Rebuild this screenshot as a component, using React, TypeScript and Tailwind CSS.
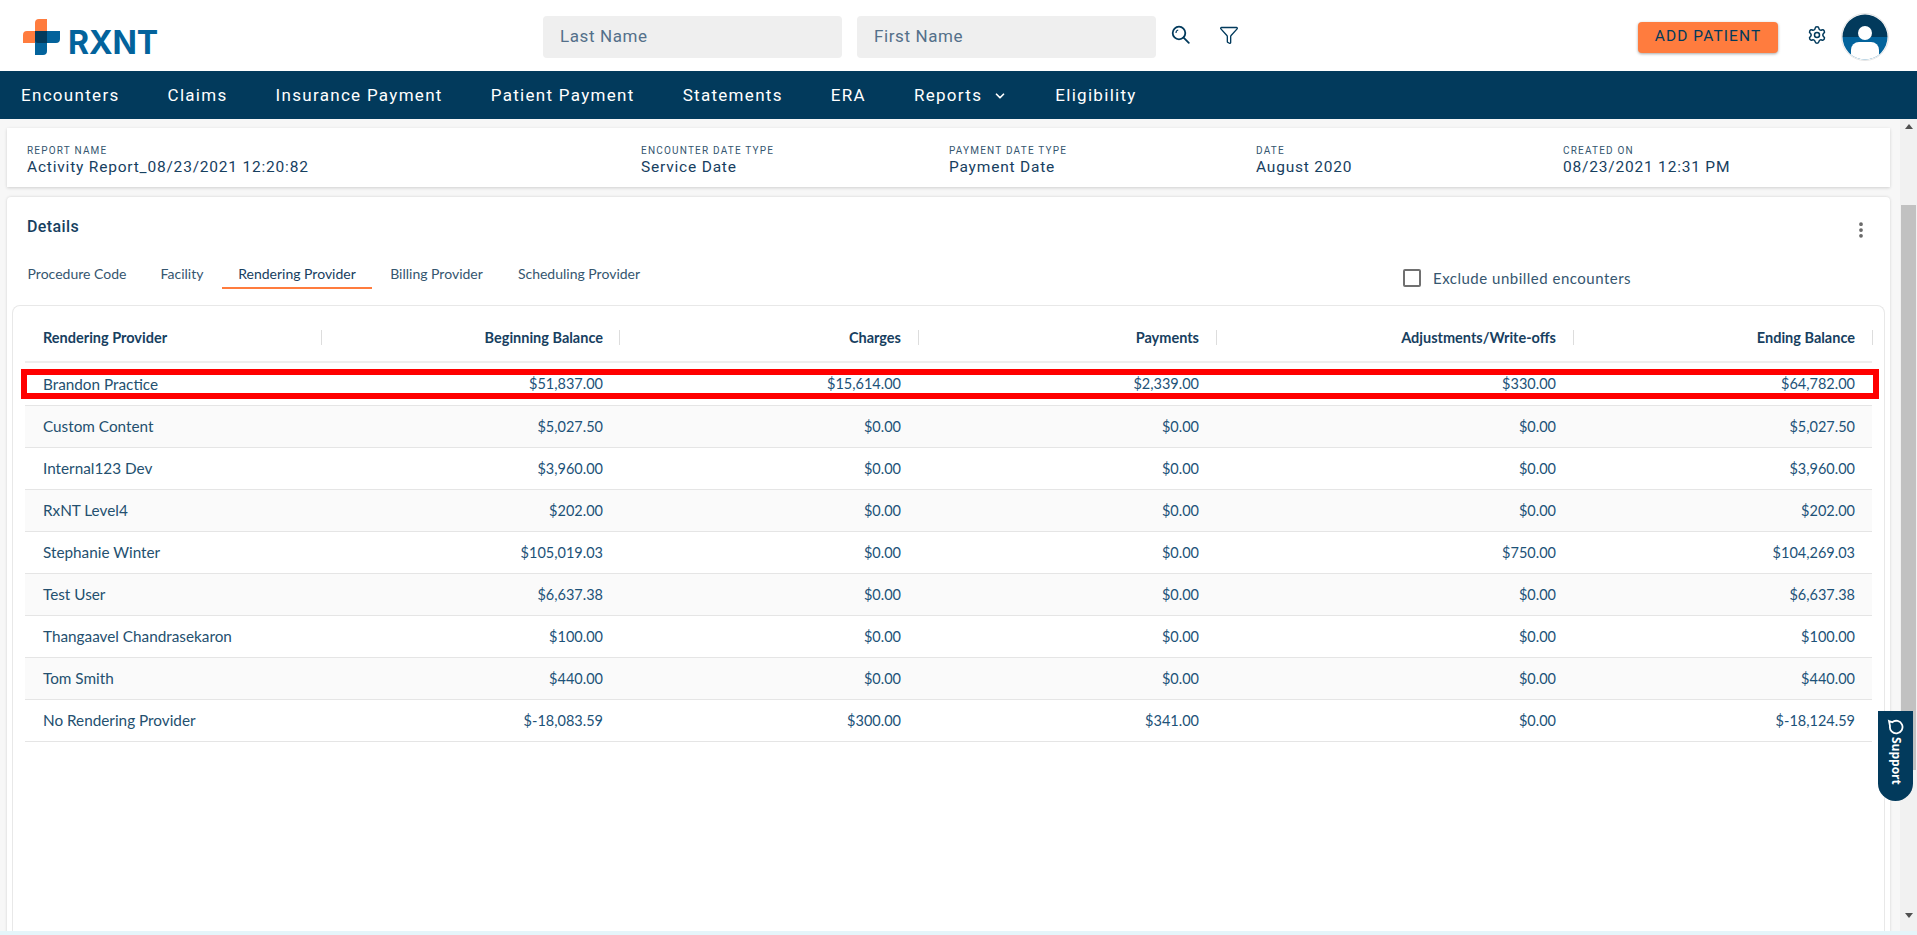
import { ChevronDown, EllipsisVertical, Filter, Settings } from "lucide-react";

const navItems = ["Encounters", "Claims", "Insurance Payment", "Patient Payment", "Statements", "ERA", "Reports", "Eligibility"];

const summary = [
  { label: "REPORT NAME", value: "Activity Report_08/23/2021 12:20:82", width: "w-[614px]" },
  { label: "ENCOUNTER DATE TYPE", value: "Service Date", width: "w-[308px]" },
  { label: "PAYMENT DATE TYPE", value: "Payment Date", width: "w-[307px]" },
  { label: "DATE", value: "August 2020", width: "w-[307px]" },
  { label: "CREATED ON", value: "08/23/2021 12:31 PM", width: "w-[300px]" },
];

const tabs = [
  { name: "Procedure Code", active: false, width: "w-[116px]" },
  { name: "Facility", active: false, width: "ml-[7px] w-[80px]" },
  { name: "Rendering Provider", active: true, width: "w-[150px]" },
  { name: "Billing Provider", active: false, width: "w-[129px]" },
  { name: "Scheduling Provider", active: false, width: "w-[156px]" },
];

const rows = [
  ["Brandon Practice", "$51,837.00", "$15,614.00", "$2,339.00", "$330.00", "$64,782.00"],
  ["Custom Content", "$5,027.50", "$0.00", "$0.00", "$0.00", "$5,027.50"],
  ["Internal123 Dev", "$3,960.00", "$0.00", "$0.00", "$0.00", "$3,960.00"],
  ["RxNT Level4", "$202.00", "$0.00", "$0.00", "$0.00", "$202.00"],
  ["Stephanie Winter", "$105,019.03", "$0.00", "$0.00", "$750.00", "$104,269.03"],
  ["Test User", "$6,637.38", "$0.00", "$0.00", "$0.00", "$6,637.38"],
  ["Thangaavel Chandrasekaron", "$100.00", "$0.00", "$0.00", "$0.00", "$100.00"],
  ["Tom Smith", "$440.00", "$0.00", "$0.00", "$0.00", "$440.00"],
  ["No Rendering Provider", "$-18,083.59", "$300.00", "$341.00", "$0.00", "$-18,124.59"],
];

const headers = ["Rendering Provider", "Beginning Balance", "Charges", "Payments", "Adjustments/Write-offs", "Ending Balance"];
const gridCols = "grid grid-cols-[297px_298px_299px_298px_357px_299px]";

function Logo() {
  return (
    <div className="flex items-end gap-[8px]">
      <svg width="37" height="36" viewBox="0 0 37 36">
        <path d="M12 4a4 4 0 0 1 4-4h8v24H0V16a4 4 0 0 1 4-4h8z" fill="#ff7c3e" />
        <path d="M12 12h25v8a4 4 0 0 1-4 4h-9v8a4 4 0 0 1-4 4h-8z" fill="#03639c" />
        <path d="M12 12h12v12H15a3 3 0 0 1-3-3z" fill="#023a5c" />
      </svg>
      <span className="font-['Inter',sans-serif] text-[32px] leading-[24px] font-bold tracking-[-0.1px] text-[#03639c]">RXNT</span>
    </div>
  );
}

function Avatar() {
  return (
    <svg width="48" height="48" viewBox="0 0 48 48">
      <defs>
        <clipPath id="avatar-clip">
          <circle cx="24" cy="24" r="22.5" />
        </clipPath>
      </defs>
      <circle cx="24" cy="24" r="23.5" fill="#fff" stroke="#e6e6e6" />
      <g clipPath="url(#avatar-clip)">
        <rect width="48" height="24" fill="#023a5c" />
        <rect y="24" width="48" height="24" fill="#03639c" />
        <circle cx="24" cy="20" r="7" fill="#fff" />
        <path d="M10 48V37a8 8 0 0 1 8-8h12a8 8 0 0 1 8 8v11z" fill="#fff" />
      </g>
    </svg>
  );
}

function Header() {
  return (
    <header className="flex h-[71px] shrink-0 items-center bg-white pt-[3px]">
      <div className="ml-[23px] w-[520px]">
        <Logo />
      </div>
      <div className="flex gap-[15px]">
        <div className="flex h-[42px] w-[299px] items-center rounded bg-[#efefef] px-[17px] text-[17px] tracking-[0.6px] text-[#54708a]">Last Name</div>
        <div className="flex h-[42px] w-[299px] items-center rounded bg-[#efefef] px-[17px] text-[17px] tracking-[0.6px] text-[#54708a]">First Name</div>
      </div>
      <svg className="mb-[5px] ml-[15px] text-[#023a5c]" width="19" height="19" viewBox="0 0 19 19" fill="none" stroke="currentColor" strokeWidth="1.8">
        <circle cx="8" cy="8" r="6.3" />
        <path d="M12.6 12.6l5.2 5.2" strokeLinecap="round" />
        <path d="M5 8a3 3 0 0 1 2.2-3" strokeWidth="1.1" />
      </svg>
      <Filter className="mb-[4px] ml-[29px] h-[20px] w-[20px] text-[#023a5c]" strokeWidth={1.6} />
      <button className="ml-[399px] h-[31px] w-[140px] rounded bg-[#ff7c3e] text-[15.5px] tracking-[1.1px] text-[#023a5c] shadow-[0_1px_3px_rgba(0,0,0,0.35)]">ADD PATIENT</button>
      <Settings className="mb-[4px] ml-[29px] h-[20px] w-[20px] text-[#023a5c]" strokeWidth={1.8} />
      <div className="mb-[1px] ml-[14px]">
        <Avatar />
      </div>
    </header>
  );
}

function Nav() {
  return (
    <nav className="flex h-[48px] shrink-0 items-center gap-[48px] bg-[#023a5c] pt-[1px] pl-[21px] text-[17px] tracking-[1.3px] text-white">
      {navItems.map((item) => (
        <span key={item} className="flex items-center">
          {item}
          {item === "Reports" && <ChevronDown className="ml-[11px] h-[14px] w-[14px]" strokeWidth={3} />}
        </span>
      ))}
    </nav>
  );
}

function Summary() {
  return (
    <section className="flex h-[59px] shrink-0 items-center bg-white pt-[6px] pl-[20px] shadow-[0_1px_3px_rgba(0,0,0,0.16)]">
      {summary.map((s) => (
        <div key={s.label} className={s.width}>
          <div className="text-[10px] leading-[13px] tracking-[1.2px] text-[#35566f]">{s.label}</div>
          <div className="mt-[1px] text-[15.5px] leading-[19px] tracking-[0.8px] text-[#17405f]">{s.value}</div>
        </div>
      ))}
    </section>
  );
}

function ReportTable() {
  return (
    <div className="mx-[5px] h-[640px] rounded-t-lg border border-b-0 border-[#e8e8e8] px-[12px] font-['Lato',sans-serif]">
      <div className={`${gridCols} h-[57px] items-center border-b-2 border-[#eeeeee] pt-[7px] text-[14.5px] font-bold text-[#17405f]`}>
        {headers.map((h, i) => (
          <div key={h} className={`h-[15px] border-r border-[#dddddd] leading-[15px] ${i < 2 ? "pr-[16px]" : "pr-[17px]"} ${i === 0 ? "pl-[18px]" : "text-right"}`}>{h}</div>
        ))}
      </div>
      {rows.map((row, r) => (
        <div key={row[0]} className={`${gridCols} relative items-center border-b border-[#e5e5e5] text-[14.5px] text-[#1d5278] ${r === 0 ? "h-[43px]" : "h-[42px]"} ${r % 2 === 1 ? "bg-[#fafafa]" : "bg-white"}`}>
          {row.map((cell, i) => (
            <div key={i} className={`${i < 2 ? "pr-[17px]" : "pr-[18px]"} ${i === 0 ? "pl-[18px] text-[15.3px] text-[#24506f]" : "text-right"}`}>{cell}</div>
          ))}
          {r === 0 && <div className="absolute top-[6px] -right-[7px] -left-[4px] h-[30px] border-[6px] border-[#ff0000]" />}
        </div>
      ))}
    </div>
  );
}

function Details() {
  return (
    <section className="mt-[10px] flex-1 rounded-t bg-white shadow-[0_0_3px_rgba(0,0,0,0.16)]">
      <div className="flex h-[64px] items-start justify-between pt-[20px] pr-[19px] pl-[20px]">
        <span className="text-[16px] leading-[20px] font-medium tracking-[0.4px] text-[#17405f]">Details</span>
        <EllipsisVertical className="mt-[3px] h-[20px] w-[20px] text-[#666666]" strokeWidth={2.5} />
      </div>
      <div className="flex h-[44px] items-start pl-[12px] font-['Lato',sans-serif] text-[14px]">
        {tabs.map((t) => (
          <div key={t.name} className={`${t.width} h-[28px] shrink-0 text-center leading-[25px] ${t.active ? "border-b-2 border-[#ff7c3e] text-[#17405f]" : "text-[#35566f]"}`}>{t.name}</div>
        ))}
        <div className="ml-[746px] flex items-center pt-[6px]">
          <span className="h-[18px] w-[18px] rounded-[2px] border-2 border-[#707070]" />
          <span className="ml-[12px] text-[15px] tracking-[0.5px] text-[#35566f]">Exclude unbilled encounters</span>
        </div>
      </div>
      <ReportTable />
    </section>
  );
}

function Scrollbar() {
  return (
    <div className="flex w-[17px] shrink-0 flex-col items-center bg-[#f1f1f1]">
      <span className="mt-[5px] h-0 w-0 border-x-[4px] border-b-[5px] border-x-transparent border-b-[#505050]" />
      <div className="mt-[76px] h-[565px] w-[15px] bg-[#c1c1c1]" />
      <span className="mt-[143px] h-0 w-0 border-x-[4px] border-t-[5px] border-x-transparent border-t-[#505050]" />
    </div>
  );
}

export default function App() {
  return (
    <div className="relative flex h-[935px] flex-col overflow-hidden bg-[#f7f7f7] font-['Roboto',sans-serif]">
      <Header />
      <Nav />
      <div className="flex min-h-0 flex-1">
        <main className="flex min-w-0 flex-1 flex-col pt-[9px] pr-[10px] pl-[7px]">
          <Summary />
          <Details />
        </main>
        <Scrollbar />
      </div>
      <div className="h-[4px] shrink-0 bg-[#e5f5fa]" />
      <div className="absolute top-[711px] left-[1878px] flex h-[90px] w-[35px] flex-col items-center rounded-b-[18px] bg-[#023a5c] pt-[7px] text-white">
        <svg width="17" height="17" viewBox="0 0 17 17" fill="none" stroke="currentColor" strokeWidth="1.8">
          <path d="M3 15l1.2-3.2A6.3 6.3 0 1 1 8 14z" transform="rotate(90 8.5 8.5)" />
        </svg>
        <span className="mt-[2px] font-['Open_Sans',sans-serif] text-[12px] leading-[14px] font-bold [writing-mode:vertical-rl]">Support</span>
      </div>
    </div>
  );
}
